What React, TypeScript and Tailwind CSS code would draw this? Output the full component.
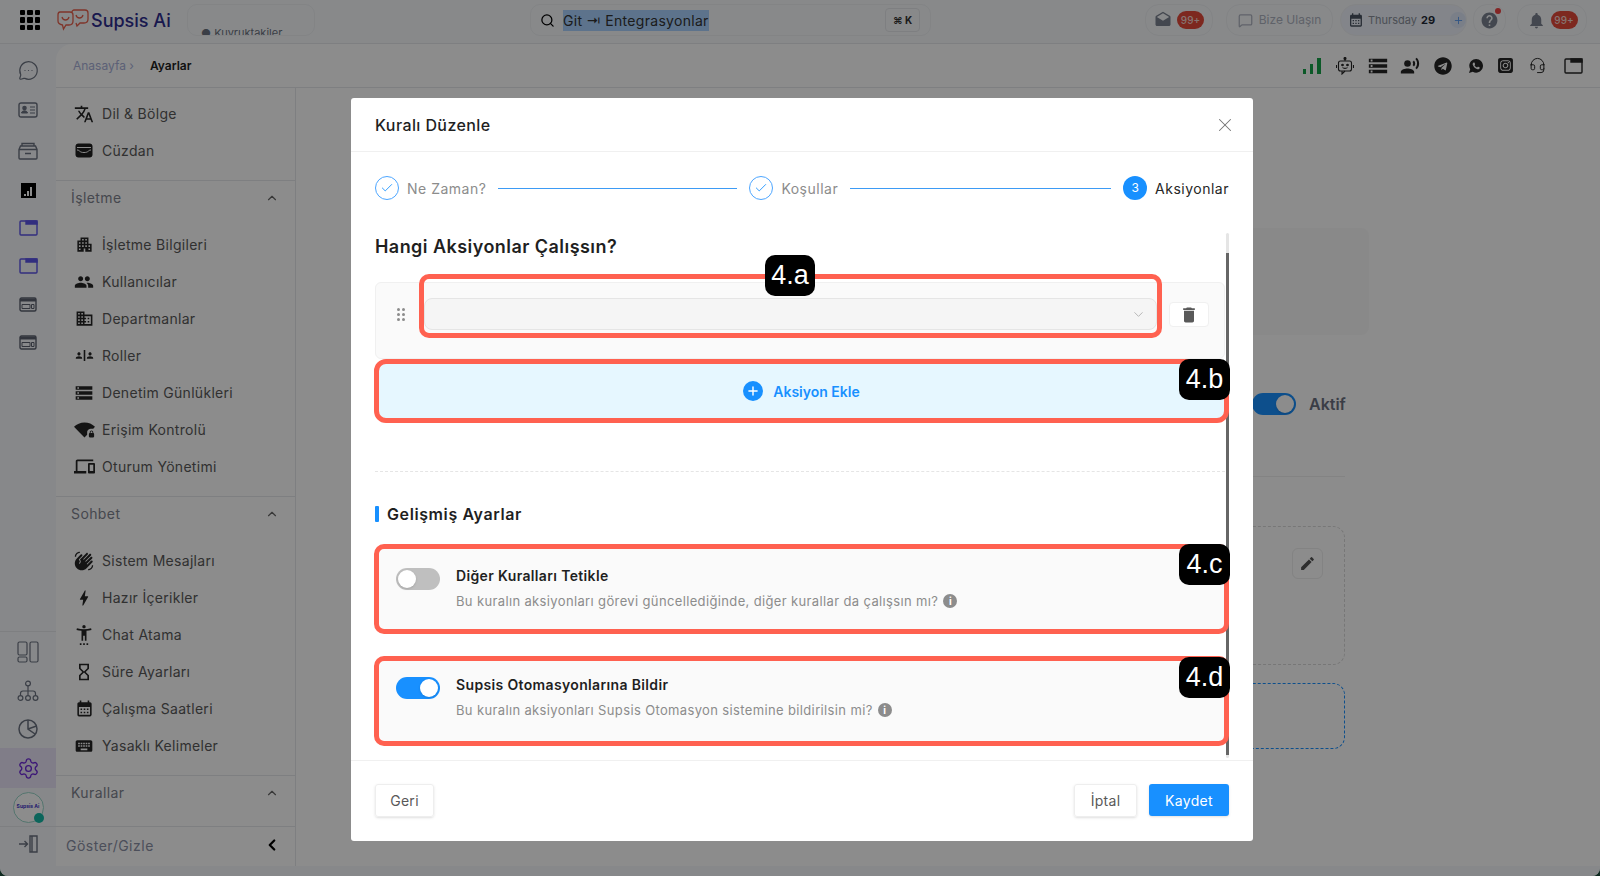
import React from "react";
import { Check, ChevronDown, ChevronLeft, ChevronUp, Headset, MessageCircleMore, MessageSquare, Plus, Search, Settings, X } from "lucide-react";
import { MdApartment, MdBolt, MdCalendarMonth, MdDevices, MdDomain, MdDrafts, MdEdit, MdHelp, MdHourglassEmpty, MdKeyboard, MdNotifications, MdPeople, MdRecordVoiceOver, MdSafetyDivider, MdSettingsAccessibility, MdStorage, MdTranslate, MdWavingHand, MdWifiLock, MdDelete } from "react-icons/md";
import { FaTelegram } from "react-icons/fa";
import { FaSquareInstagram } from "react-icons/fa6";
import { IoLogoWhatsapp } from "react-icons/io";

const F = "font-['Inter','Noto_Sans',sans-serif]";

function WalletIcon() {
  return (
    <svg width="18" height="15" viewBox="0 0 18 15">
      <rect x="0.5" y="0.5" width="17" height="14" rx="3" fill="#1f1f1f" />
      <path d="M2 4.5h14M2 7c3 0 2 2.5 7 2.5S13 7 16 7" stroke="#fff" strokeWidth="1" fill="none" />
    </svg>
  );
}

function TabIcon({ color }: { color: string }) {
  return (
    <svg width="19" height="16" viewBox="0 0 19 16" fill="none" stroke={color} strokeWidth="1.4">
      <rect x="1" y="1" width="17" height="14" rx="1" />
      <path d="M7 1h11v3H7z" fill={color} />
    </svg>
  );
}

function WindowIcon() {
  return (
    <svg width="18" height="15" viewBox="0 0 18 15" fill="none" stroke="#5c6270" strokeWidth="1.4">
      <rect x="1" y="1" width="16" height="13" rx="1.5" />
      <path d="M1 3h16" strokeWidth="3" />
      <path d="M3 7.5h8v4H3zM12.5 7.5H15v4h-2.5z" strokeWidth="1" />
    </svg>
  );
}

function RailIcon({ kind }: { kind: string }) {
  const s = { fill: "none", stroke: "#6b7280", strokeWidth: 1.4 };
  if (kind === "id")
    return (
      <svg width="20" height="16" viewBox="0 0 20 16" {...s}>
        <rect x="1" y="1" width="18" height="14" rx="2" />
        <circle cx="6.5" cy="6" r="1.6" fill="#6b7280" />
        <path d="M3.5 11c.4-3 5.6-3 6 0zM12 5h5M12 8h5M12 11h5" fill="#6b7280" strokeWidth="1" />
      </svg>
    );
  if (kind === "box")
    return (
      <svg width="20" height="18" viewBox="0 0 20 18" {...s}>
        <path d="M4 4V1.5h12V4M2.5 4h15M1 7.5l1.5-3.5h15L19 7.5V16a1 1 0 0 1-1 1H2a1 1 0 0 1-1-1zM1 7.5h18M7 11.5h6" />
      </svg>
    );
  if (kind === "layout")
    return (
      <svg width="22" height="22" viewBox="0 0 22 22" {...s} strokeWidth="1.2">
        <rect x="1" y="1" width="9" height="13" rx="1.5" />
        <rect x="1" y="16" width="9" height="5" rx="1.5" />
        <rect x="13" y="1" width="8" height="20" rx="1.5" />
      </svg>
    );
  if (kind === "tree")
    return (
      <svg width="22" height="22" viewBox="0 0 22 22" {...s} strokeWidth="1.2">
        <circle cx="11" cy="3.5" r="2.4" />
        <circle cx="3.5" cy="18" r="2.4" />
        <circle cx="11" cy="18" r="2.4" />
        <circle cx="18.5" cy="18" r="2.4" />
        <path d="M11 6v9.5M3.5 15.5v-2c0-1.5 1-2.5 2.5-2.5h10c1.500 0 2.500 1 2.500 2.500v2" />
      </svg>
    );
  if (kind === "pie")
    return (
      <svg width="20" height="20" viewBox="0 0 20 20" {...s} strokeWidth="1.5">
        <circle cx="10" cy="10" r="9" />
        <path d="M10 1v9l7 5M10 10l8.500-3" />
      </svg>
    );
  return (
    <svg width="20" height="18" viewBox="0 0 20 18" {...s} strokeWidth="1.4">
      <path d="M1 9h8M6.500 6l3 3-3 3" />
      <path d="M12 1h2v16h-2zM14 1h5v16h-5" />
    </svg>
  );
}

function Item({ icon, label }: { icon: React.ReactNode; label: string }) {
  return (
    <div className="flex h-[37px] shrink-0 items-center pl-[14px] text-[#262626]">
      <span className="flex w-[28px] justify-center">{icon}</span>
      <span className="ml-[4px] text-[14px] tracking-[0.3px] text-[#595959]">{label}</span>
    </div>
  );
}

function Group({ title }: { title: string }) {
  return (
    <div className="flex h-[46px] shrink-0 items-start justify-between border-t border-[#e5e7eb] pl-[15px] pr-[16px] pt-[7px] text-[14px] leading-[20px] tracking-[0.4px] text-[#80838f]">
      <span>{title}</span>
      <ChevronUp size={14} className="mt-[3px] text-[#666]" />
    </div>
  );
}

function Pill({ children, cls = "" }: { children: React.ReactNode; cls?: string }) {
  return <div className={"flex h-[32px] items-center rounded-[14px] border border-[#eef0f3] " + cls}>{children}</div>;
}

function Badge99() {
  return <span className="flex h-[18px] w-[27px] items-center justify-center rounded-full bg-[#e34a3a] text-[10px] font-medium text-[#f5d5d0]">99+</span>;
}

function Toggle({ on }: { on: boolean }) {
  return (
    <div className={"flex h-[22px] w-[44px] shrink-0 items-center rounded-full px-[2px] " + (on ? "justify-end bg-[#1890ff]" : "justify-start bg-[#bfbfbf]")}>
      <div className="h-[18px] w-[18px] rounded-full bg-white shadow" />
    </div>
  );
}

function Mark({ label, cls }: { label: string; cls: string }) {
  return (
    <div className={"absolute z-10 flex h-[41px] items-center justify-center rounded-[10px] bg-black font-['Liberation_Sans',sans-serif] text-[27px] font-normal tracking-normal text-white " + cls}>
      {label}
    </div>
  );
}

function Step({ n, label, done, active }: { n: number; label: string; done?: boolean; active?: boolean }) {
  return (
    <div className="flex shrink-0 items-center gap-[8px]">
      {done ? (
        <span className="flex h-[24px] w-[24px] items-center justify-center rounded-full border border-[#4da6ff] text-[#1890ff]">
          <Check size={14} strokeWidth={1.5} />
        </span>
      ) : (
        <span className="flex h-[24px] w-[24px] items-center justify-center rounded-full bg-[#1890ff] text-[12px] text-white">{n}</span>
      )}
      <span className={"text-[14px] tracking-[0.5px] " + (active ? "text-[#262626]" : "text-[#8c8c8c]")}>{label}</span>
    </div>
  );
}

function SettingCard({ on, title, desc, cls, badge, badgeCls }: { on: boolean; title: string; desc: string; cls: string; badge: string; badgeCls: string }) {
  return (
    <div className={"relative flex h-[90px] rounded-[10px] border-[5px] border-[#ff6150] bg-[#fafafa] pl-[17px] " + cls}>
      <Toggle on={on} />
      <div className="-mt-[1px] ml-[16px]">
        <div className="text-[14px] font-semibold leading-[18px] tracking-[0.35px] text-[#1f1f1f]">{title}</div>
        <div className="mt-[7px] flex items-center gap-[5px] text-[13px] leading-[18px] tracking-[0.36px] text-[#8c8c8c]">
          {desc}
          <span className="flex h-[14px] w-[14px] items-center justify-center rounded-full bg-[#8c8c8c] text-[10px] font-bold tracking-normal text-white">i</span>
        </div>
      </div>
      <Mark label={badge} cls={"-right-[6px] w-[51px] " + badgeCls} />
    </div>
  );
}

function Rail({ children, cls = "h-[38px]" }: { children: React.ReactNode; cls?: string }) {
  return <div className={"flex w-full shrink-0 items-center justify-center " + cls}>{children}</div>;
}

export default function App() {
  return (
    <div className="h-[876px] w-[1600px] overflow-hidden bg-[#0f2a20]">
      <div className={"relative flex h-[876px] w-[1600px] flex-col overflow-hidden rounded-b-[8px] bg-[#f6f8fb] " + F}>
        <header className="flex h-[44px] shrink-0 items-center border-b border-[#e5e7eb] bg-[#f8fafc] pb-[3px]">
          <div className="ml-[20px] grid h-[20px] w-[20px] grid-cols-3 gap-[2px]">
            {Array.from({ length: 9 }).map((_, i) => (
              <span key={i} className="rounded-[1px] bg-black" />
            ))}
          </div>
          <svg className="ml-[17px]" width="32" height="22" viewBox="0 0 32 22" fill="none" stroke="#e8604c" strokeWidth="1.3">
            <path d="M3 3h10c2 0 3 1 3 3v6c0 3-2 4-4 4H9l-2.500 4-1-4C3 15.500 1 14 1 12V6c0-2 1-3 2-3z" />
            <path d="M15 3c0-1 1-2 2-2h11c2 0 3 1 3 3v6c0 3-2 4-4 4h-4l-3 3-1-3" />
            <path d="M5 8c1 4 6 4 7 0M19 6c1 4 6 4 7 0" />
          </svg>
          <span className="ml-[2px] w-[80px] shrink-0 text-[18px] font-medium text-[#2e2d8f]">Supsis Ai</span>
          <div className="ml-[16px] h-[32px] w-[128px] shrink-0 overflow-hidden rounded-[10px] border border-[#eef0f3] pl-[13px] pt-[21px] text-[11px] leading-[14px] text-[#6b7280]">
            ● Kuyruktakiler
          </div>
          <div className="ml-[215px] flex h-[32px] w-[401px] shrink-0 items-center rounded-[10px] border border-[#eef0f3] pl-[9px] pr-[10px] text-[14px] tracking-[0.3px] text-[#333]">
            <Search size={15} className="text-black" />
            <span className="ml-[8px] bg-[#a9d2ff] leading-[21px]">Git ⇥ Entegrasyonlar</span>
            <span className="ml-auto flex h-[24px] w-[35px] items-center justify-center rounded-[4px] border border-[#e5e7eb] text-[10px] font-bold tracking-normal">⌘ K</span>
          </div>
          <div className="ml-auto flex items-center pr-[13px] text-[#7b8290]">
            <Pill cls="w-[68px] justify-center gap-[5px]"><MdDrafts size={18} /><Badge99 /></Pill>
            <Pill cls="ml-[13px] w-[107px] justify-center gap-[6px] text-[12px] text-[#aeb3c0]"><MessageSquare size={15} />Bize Ulaşın</Pill>
            <Pill cls="ml-[7px] w-[127px] gap-[4px] rounded-[16px] bg-[#eef3fb] pl-[7px] text-[11px] text-[#8a8f9a]">
              <MdCalendarMonth size={16} className="text-[#4b5563]" />Thursday <b className="text-[#1f2937]">29</b>
              <span className="ml-[11px] flex h-[16px] w-[16px] items-center justify-center rounded-full bg-[#dfe8f8]"><Plus size={11} className="text-[#5b9bf0]" /></span>
            </Pill>
            <Pill cls="relative ml-[6px] w-[33px] justify-center">
              <MdHelp size={19} />
              <span className="absolute right-[4px] top-[3px] h-[6px] w-[6px] rounded-full bg-[#ef4444]" />
            </Pill>
            <Pill cls="ml-[11px] w-[70px] justify-center gap-[5px]"><MdNotifications size={19} /><Badge99 /></Pill>
          </div>
        </header>

        <div className="flex min-h-0 flex-1">
          <nav className="flex w-[56px] shrink-0 flex-col items-center pt-[6px] text-[#6b7280]">
            <Rail cls="h-[40px]"><MessageCircleMore size={21} strokeWidth={1.4} /></Rail>
            <Rail cls="h-[40px]"><RailIcon kind="id" /></Rail>
            <Rail cls="h-[41px]"><RailIcon kind="box" /></Rail>
            <Rail>
              <span className="flex h-[15px] w-[15px] items-end justify-center gap-[1px] bg-black pb-[2px]">
                <i className="h-[2px] w-[2px] bg-white" /><i className="h-[5px] w-[2px] bg-white" /><i className="h-[9px] w-[2px] bg-white" />
              </span>
            </Rail>
            <Rail><TabIcon color="#5b54e8" /></Rail>
            <Rail><TabIcon color="#5b54e8" /></Rail>
            <Rail><WindowIcon /></Rail>
            <Rail><WindowIcon /></Rail>
            <div className="mt-auto flex w-full flex-col items-center border-t border-[#e5e7eb]">
              <div className="flex h-[39px] items-center"><RailIcon kind="layout" /></div>
              <div className="flex h-[39px] items-center"><RailIcon kind="tree" /></div>
              <div className="flex h-[38px] items-center"><RailIcon kind="pie" /></div>
              <div className="flex h-[40px] w-full items-center justify-center bg-[#e9e3f7]"><Settings size={23} strokeWidth={1.4} className="text-[#6d28d9]" /></div>
              <div className="flex h-[38px] items-center">
                <div className="relative flex h-[31px] w-[31px] items-center justify-center rounded-full border border-[#99d5c9] bg-white text-[5px] font-bold text-[#4338ca]">
                  Supsis Ai
                  <span className="absolute -bottom-[1px] -right-[1px] h-[10px] w-[10px] rounded-full bg-[#14b8a6]" />
                </div>
              </div>
              <div className="flex h-[50px] w-full items-start justify-center border-t border-[#e5e7eb] pt-[8px]"><RailIcon kind="login" /></div>
            </div>
          </nav>

          <main className="mb-[10px] flex min-w-0 flex-1 flex-col overflow-hidden rounded-tl-[16px] bg-white">
            <div className="flex h-[44px] shrink-0 items-center border-b border-[#e5e7eb] pl-[17px] pr-[15px] text-[12px]">
              <span className="text-[#a8b0d8]">Anasayfa ›</span>
              <span className="ml-[16px] font-semibold text-[#1f1f1f]">Ayarlar</span>
              <div className="ml-auto flex items-center text-[#262626]">
                <span className="flex w-[24px] justify-center">
                  <svg width="18" height="16" viewBox="0 0 18 16" fill="#16a34a"><rect x="0" y="11" width="3" height="5" /><rect x="7" y="6" width="3" height="10" /><rect x="14" y="0" width="4" height="16" /></svg>
                </span>
                <span className="ml-[9px] flex w-[24px] justify-center">
                  <svg width="18" height="18" viewBox="0 0 18 18" fill="none" stroke="#262626" strokeWidth="1.1">
                    <path d="M9 1v3" /><circle cx="9" cy="1.500" r="1" fill="#262626" />
                    <rect x="2.500" y="4" width="13" height="10" rx="2" />
                    <path d="M6 14v3l3-3M.5 8v3M17.500 8v3" />
                    <circle cx="6.500" cy="8" r=".8" fill="#262626" /><circle cx="11.500" cy="8" r=".8" fill="#262626" />
                    <path d="M6.500 10.500c1 1.200 4 1.200 5 0" />
                  </svg>
                </span>
                <span className="ml-[9px] flex w-[24px] justify-center"><MdStorage size={22} /></span>
                <span className="ml-[8px] flex w-[24px] justify-center"><MdRecordVoiceOver size={20} /></span>
                <span className="ml-[9px] flex w-[24px] justify-center"><FaTelegram size={18} /></span>
                <span className="ml-[9px] flex w-[24px] justify-center"><IoLogoWhatsapp size={16} /></span>
                <span className="ml-[5px] flex w-[24px] justify-center"><FaSquareInstagram size={17} /></span>
                <span className="ml-[8px] flex w-[24px] justify-center"><Headset size={17} strokeWidth={1.4} /></span>
                <span className="ml-[12px] flex w-[24px] justify-center"><TabIcon color="#262626" /></span>
              </div>
            </div>
            <div className="flex min-h-0 flex-1">
              <aside className="flex w-[240px] shrink-0 flex-col border-r border-[#e5e7eb] bg-white pt-[7px]">
                <Item icon={<MdTranslate size={20} />} label="Dil & Bölge" />
                <Item icon={<WalletIcon />} label="Cüzdan" />
                <div className="h-[11px] shrink-0" />
                <Group title="İşletme" />
                <Item icon={<MdApartment size={19} />} label="İşletme Bilgileri" />
                <Item icon={<MdPeople size={20} />} label="Kullanıcılar" />
                <Item icon={<MdDomain size={19} />} label="Departmanlar" />
                <Item icon={<MdSafetyDivider size={19} />} label="Roller" />
                <Item icon={<MdStorage size={20} />} label="Denetim Günlükleri" />
                <Item icon={<MdWifiLock size={21} />} label="Erişim Kontrolü" />
                <Item icon={<MdDevices size={21} />} label="Oturum Yönetimi" />
                <div className="h-[11px] shrink-0" />
                <Group title="Sohbet" />
                <Item icon={<MdWavingHand size={20} />} label="Sistem Mesajları" />
                <Item icon={<MdBolt size={20} />} label="Hazır İçerikler" />
                <Item icon={<MdSettingsAccessibility size={20} />} label="Chat Atama" />
                <Item icon={<MdHourglassEmpty size={20} />} label="Süre Ayarları" />
                <Item icon={<MdCalendarMonth size={19} />} label="Çalışma Saatleri" />
                <Item icon={<MdKeyboard size={20} />} label="Yasaklı Kelimeler" />
                <div className="h-[11px] shrink-0" />
                <Group title="Kurallar" />
                <div className="mt-auto flex h-[40px] shrink-0 items-start justify-between border-t border-[#e5e7eb] pl-[10px] pr-[14px] pt-[9px] text-[14px] leading-[20px] tracking-[0.5px] text-[#8a90a5]">
                  <span>Göster/Gizle</span>
                  <ChevronLeft size={18} strokeWidth={3} className="text-black" />
                </div>
              </aside>
              <section className="relative min-w-0 flex-1 bg-white">
                <div className="absolute left-[900px] right-[231px] top-[140px] h-[107px] rounded-[8px] bg-[#fafafa]" />
                <div className="absolute left-[956px] top-[304px] flex items-center gap-[13px] text-[16px] font-semibold text-[#6b7080]">
                  <Toggle on />Aktif
                </div>
                <div className="absolute left-[900px] right-[255px] top-[388px] border-t border-[#eeeeee]" />
                <div className="absolute left-[900px] right-[255px] top-[438px] h-[139px] rounded-[12px] border border-dashed border-[#d9d9d9]">
                  <span className="absolute right-[21px] top-[21px] flex h-[31px] w-[31px] items-center justify-center rounded-[6px] border border-[#eeeeee] text-[#555]"><MdEdit size={17} /></span>
                </div>
                <div className="absolute left-[900px] right-[255px] top-[595px] h-[66px] rounded-[12px] border border-dashed border-[#1890ff]" />
              </section>
            </div>
          </main>
        </div>

        <div className="absolute inset-0 flex items-start justify-center bg-black/45 pl-[4px] pt-[98px]">
          <div className="flex h-[743px] w-[902px] flex-col rounded-[3px] bg-white">
            <div className="flex h-[54px] shrink-0 items-center justify-between border-b border-[#f0f0f0] pl-[24px] pr-[17px]">
              <span className="text-[16px] font-medium tracking-[0.4px] text-[#1f1f1f]">Kuralı Düzenle</span>
              <X size={22} strokeWidth={1.1} className="text-[#737373]" />
            </div>

            <div className="flex h-[72px] shrink-0 items-center pl-[24px] pr-[24px]">
              <Step n={1} label="Ne Zaman?" done />
              <div className="mx-[12px] h-px w-[239px] shrink-0 bg-[#3d9bf5]" />
              <Step n={2} label="Koşullar" done />
              <div className="mx-[12px] h-px flex-1 bg-[#3d9bf5]" />
              <Step n={3} label="Aksiyonlar" active />
            </div>

            <div className="relative min-h-0 flex-1 pl-[23px] pr-[24px]">
              <div className="absolute right-[24px] top-[9px] h-[525px] w-[3px] rounded-full bg-[#e5e5e5]">
                <div className="mt-[20px] h-[502px] w-[3px] bg-[#666666]" />
              </div>
              <div className="pl-[1px] pt-[9px] text-[18px] font-semibold leading-[27px] tracking-[0.45px] text-[#1f1f1f]">Hangi Aksiyonlar Çalışsın?</div>
              <div className="relative ml-[1px] mr-[4px] mt-[22px] flex h-[77px] items-start rounded-[6px] border border-[#f0f0f0] bg-[#fafafa]">
                <div className="ml-[21px] mt-[25px] grid grid-cols-2 gap-x-[2px] gap-y-[2px]">
                  {Array.from({ length: 6 }).map((_, i) => (
                    <span key={i} className="h-[3px] w-[3px] rounded-full bg-[#8c8c8c]" />
                  ))}
                </div>
                <div className="relative -mt-[9px] ml-[14px] h-[64px] w-[743px] rounded-[10px] border-[5px] border-[#ff6150] pt-[19px]">
                  <div className="flex h-[32px] items-center justify-end rounded-[8px] border border-[#e5e5e5] bg-[#f5f5f5] pr-[10px] text-[#a3a3a3]">
                    <ChevronDown size={15} strokeWidth={1.2} />
                  </div>
                  <Mark label="4.a" cls="left-[341px] -top-[24px] w-[50px]" />
                </div>
                <span className="ml-[7px] mt-[19px] flex h-[25px] w-[40px] items-center justify-center rounded-[4px] border border-[#f0f0f0] bg-white text-[#595959]"><MdDelete size={20} /></span>
              </div>
              <div className="relative flex h-[64px] items-center justify-center gap-[10px] rounded-[12px] border-[5px] border-[#ff6150] bg-[#e6f7ff] text-[14px] font-semibold text-[#1890ff]">
                <span className="flex h-[20px] w-[20px] items-center justify-center rounded-full bg-[#1890ff] text-white"><Plus size={14} strokeWidth={2.5} /></span>
                Aksiyon Ekle
                <Mark label="4.b" cls="-right-[6px] -top-[5px] w-[51px]" />
              </div>
              <div className="ml-[1px] mr-[4px] mt-[48px] border-t border-dashed border-[#e5e5e5]" />
              <div className="ml-[1px] mt-[34px] flex items-center gap-[8px] text-[16px] font-semibold leading-[16px] tracking-[0.6px] text-[#1f1f1f]">
                <span className="h-[16px] w-[4px] rounded-[1px] bg-[#1890ff]" />Gelişmiş Ayarlar
              </div>
              <SettingCard on={false} title="Diğer Kuralları Tetikle" desc="Bu kuralın aksiyonları görevi güncellediğinde, diğer kurallar da çalışsın mı?" cls="mt-[22px] pt-[19px]" badge="4.c" badgeCls="-top-[5px]" />
              <SettingCard on title="Supsis Otomasyonlarına Bildir" desc="Bu kuralın aksiyonları Supsis Otomasyon sistemine bildirilsin mi?" cls="mt-[22px] pt-[16px]" badge="4.d" badgeCls="-top-[4px]" />
            </div>

            <div className="flex h-[81px] shrink-0 items-start justify-between border-t border-[#f0f0f0] px-[24px] pt-[23px] text-[14px] tracking-[0.3px]">
              <span className="flex h-[33px] w-[59px] items-center justify-center rounded-[3px] border border-[#eeeeee] text-[#595959] shadow-sm">Geri</span>
              <div className="flex gap-[12px]">
                <span className="flex h-[33px] w-[63px] items-center justify-center rounded-[3px] border border-[#eeeeee] text-[#595959] shadow-sm">İptal</span>
                <span className="flex h-[32px] w-[80px] items-center justify-center rounded-[3px] bg-[#1890ff] text-white shadow-sm">Kaydet</span>
              </div>
            </div>
          </div>
        </div>
      </div>
    </div>
  );
}
